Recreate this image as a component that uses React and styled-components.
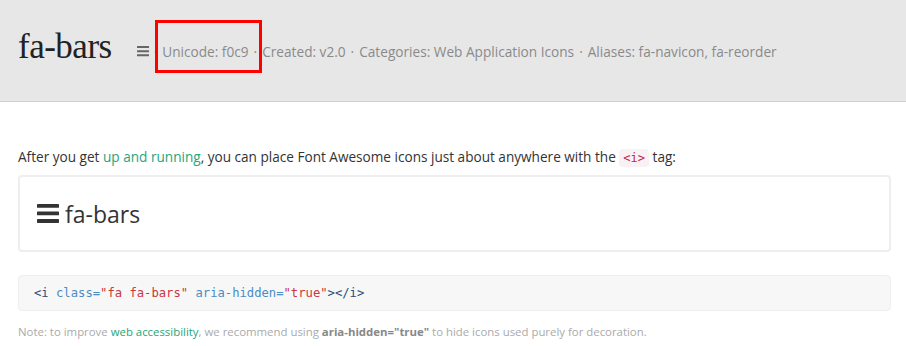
import React from 'react';
import styled, { createGlobalStyle } from 'styled-components';

const GlobalStyle = createGlobalStyle`
  body {
    margin: 0;
    background: #fff;
    font-family: "Open Sans", Lato, sans-serif;
    color: #333;
  }
`;

const Page = styled.div`
  width: 906px;
  height: 346px;
  overflow: hidden;
`;

const Header = styled.header`
  position: relative;
  height: 101px;
  background: #e7e7e7;
  border-bottom: 1px solid #cfcfcf;
  display: flex;
  align-items: center;
  padding: 0 18px;
`;

const Title = styled.h1`
  margin: 0;
  font-family: "Liberation Serif", "DejaVu Serif", serif;
  font-weight: 400;
  font-size: 35px;
  color: #222;
  letter-spacing: -0.5px;
  margin-top: -8px;
`;

const Meta = styled.div`
  display: flex;
  align-items: center;
  margin-left: 25px;
  font-size: 13.65px;
  color: #8a8a8a;
  margin-top: 2px;
`;

const Dot = styled.span`
  margin: 0 5px;
`;

const Highlight = styled.div`
  position: absolute;
  left: 155px;
  top: 20px;
  width: 101px;
  height: 47px;
  border: 3px solid #f00;
`;

const Main = styled.main`
  padding: 44px 15px 0 18px;
`;

const Lead = styled.p`
  margin: 0 0 6px;
  font-size: 13.6px;
  line-height: 22px;
  color: #333;
`;

const Link = styled.a`
  color: #27a57a;
  text-decoration: none;
`;

const InlineCode = styled.code`
  font-family: "DejaVu Sans Mono", "Liberation Mono", monospace;
  font-size: 12px;
  color: #c7254e;
  background: #f9f2f4;
  border-radius: 4px;
  padding: 2px 4px;
`;

const Example = styled.div`
  height: 73px;
  border: 2px solid #eee;
  border-radius: 4px;
  display: flex;
  align-items: center;
  padding: 0 17px;
  font-size: 23px;
  color: #333;
  gap: 6px;
`;

const CodeBlock = styled.pre`
  margin: 23px 0 0;
  height: 36px;
  box-sizing: border-box;
  background: #f7f7f7;
  border: 1px solid #efefef;
  border-radius: 4px;
  padding: 0 15px;
  display: flex;
  align-items: center;
  font-family: "DejaVu Sans Mono", "Liberation Mono", monospace;
  font-size: 12.2px;
`;

const Tok = styled.span`
  color: ${p => (p.$kind === 'tag' ? '#2b4f7a' : p.$kind === 'attr' ? '#4a8cc4' : p.$kind === 'str' ? '#c8383f' : '#333')};
`;

const Note = styled.p`
  margin: 13px 0 0;
  font-size: 11.4px;
  color: #aaa;
  strong {
    color: #888;
    font-weight: 700;
  }
`;

const Bars = ({ size = 12, color = '#555' }) => (
  <svg width={size} height={size * 0.86} viewBox="0 0 14 12" fill={color}>
    <rect x="0" y="0" width="14" height="2.4" rx="0.4" />
    <rect x="0" y="4.8" width="14" height="2.4" rx="0.4" />
    <rect x="0" y="9.6" width="14" height="2.4" rx="0.4" />
  </svg>
);

export default function App() {
  return (
    <Page>
      <GlobalStyle />
      <Header>
        <Title>fa-bars</Title>
        <Meta>
          <Bars size={12} color="#666" />
          <Dot>·</Dot>
          Unicode: f0c9<Dot>·</Dot>Created: v2.0<Dot>·</Dot>Categories: Web Application Icons<Dot>·</Dot>Aliases: fa-navicon, fa-reorder
        </Meta>
        <Highlight />
      </Header>
      <Main>
        <Lead>
          After you get <Link href="#">up and running</Link>, you can place Font Awesome icons just about anywhere with the <InlineCode>&lt;i&gt;</InlineCode> tag:
        </Lead>
        <Example>
          <Bars size={22} color="#333" />
          fa-bars
        </Example>
        <CodeBlock>
          <Tok $kind="tag">&lt;i</Tok>&nbsp;<Tok $kind="attr">class=</Tok><Tok $kind="str">"fa fa-bars"</Tok>&nbsp;<Tok $kind="attr">aria-hidden=</Tok><Tok $kind="str">"true"</Tok><Tok $kind="tag">&gt;&lt;/i&gt;</Tok>
        </CodeBlock>
        <Note>
          Note: to improve <Link href="#">web accessibility</Link>, we recommend using <strong>aria-hidden="true"</strong> to hide icons used purely for decoration.
        </Note>
      </Main>
    </Page>
  );
}
